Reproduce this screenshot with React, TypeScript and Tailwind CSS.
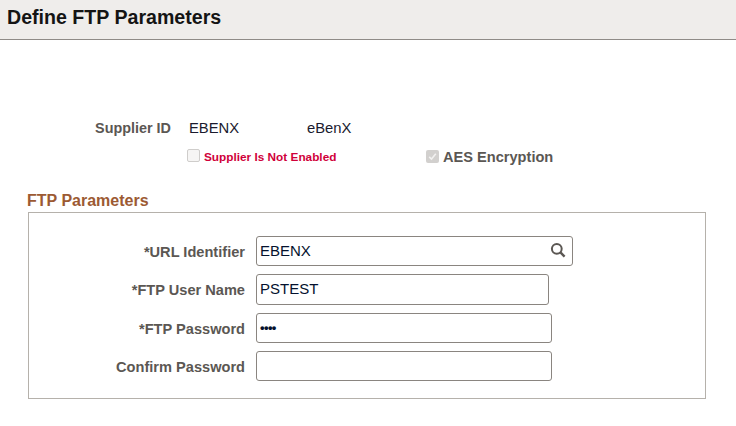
const font = "font-['Liberation_Sans',Arial,sans-serif]";

function Row({ label, value, width, height, mt, search, password }: { label: string; value: string; width: string; height: string; mt: string; search?: boolean; password?: boolean }) {
  return (
    <div className={`flex items-center ${mt}`}>
      <div className="w-[216px] shrink-0 pt-[1px] text-right text-[14.6px] font-bold leading-[16px] text-[#5b5753]">{label}</div>
      <div className={`relative ml-[11px] flex items-center rounded-[3px] border border-[#8a8580] bg-white pl-[3px] text-[15px] leading-[16px] text-[#04122e] ${width} ${height}`}>
        {password ? <span className="text-[13px] font-bold leading-[16px] tracking-[-0.6px]">{value}</span> : <span className="-mt-[1px]">{value}</span>}
        {search && (
          <svg className="absolute right-[6px] top-[5px] h-[16px] w-[16px]" viewBox="0 0 16 16" fill="none" stroke="#5b5753" strokeWidth="2">
            <circle cx="6.8" cy="6.8" r="4.9" />
            <path d="M10.4 10.4L14.6 14.6" strokeWidth="2.4" />
          </svg>
        )}
      </div>
    </div>
  );
}

export default function App() {
  return (
    <div className={`h-[426px] w-[736px] overflow-hidden bg-white ${font}`}>
      <div className="flex h-[40px] items-start border-b border-[#8f8b87] bg-[#efedeb] pl-[7px] pt-[6px]">
        <h1 className="text-[19.6px] font-bold leading-[22px] text-[#141414]">Define FTP Parameters</h1>
      </div>

      <div className="mt-[80px] flex h-[16px] items-center text-[14.8px] leading-[16px]">
        <div className="w-[171px] shrink-0 text-right font-bold text-[#5b5753] text-[14.4px]">Supplier ID</div>
        <div className="ml-[18px] w-[118px] shrink-0 text-[#1a1a2e]">EBENX</div>
        <div className="text-[#1a1a2e]">eBenX</div>
      </div>

      <div className="mt-[12px] flex h-[17px] items-center">
        <div className="ml-[187px] mb-[3px] h-[13px] w-[13px] shrink-0 rounded-[2px] border border-[#cfcdcb] bg-[#f6f5f4]" />
        <div className="ml-[4px] w-[222px] shrink-0 text-[11.8px] font-bold leading-[14px] text-[#d0003a]">Supplier Is Not Enabled</div>
        <div className="flex h-[13px] w-[13px] shrink-0 items-center justify-center rounded-[2px] bg-[#d2d0ce]">
          <svg className="h-[11px] w-[11px]" viewBox="0 0 11 11" fill="none" stroke="#f2f1f0" strokeWidth="1.6">
            <path d="M2.2 5.8L4.5 8L8.8 2.8" />
          </svg>
        </div>
        <div className="ml-[4px] text-[14.6px] font-bold leading-[16px] text-[#5b5753]">AES Encryption</div>
      </div>

      <div className="ml-[27px] mt-[27px] text-[16px] font-bold leading-[18px] text-[#9c5a33]">FTP Parameters</div>

      <div className="ml-[28px] mt-[2px] h-[187px] w-[678px] border border-[#b5b1ab] pt-[23px]">
        <Row label="*URL Identifier" value="EBENX" width="w-[317px]" height="h-[30px]" mt="mt-0" search />
        <Row label="*FTP User Name" value="PSTEST" width="w-[293px]" height="h-[31px]" mt="mt-[8px]" />
        <Row label="*FTP Password" value="••••" width="w-[296px]" height="h-[30px]" mt="mt-[8px]" password />
        <Row label="Confirm Password" value="" width="w-[296px]" height="h-[30px]" mt="mt-[8px]" />
      </div>
    </div>
  );
}
